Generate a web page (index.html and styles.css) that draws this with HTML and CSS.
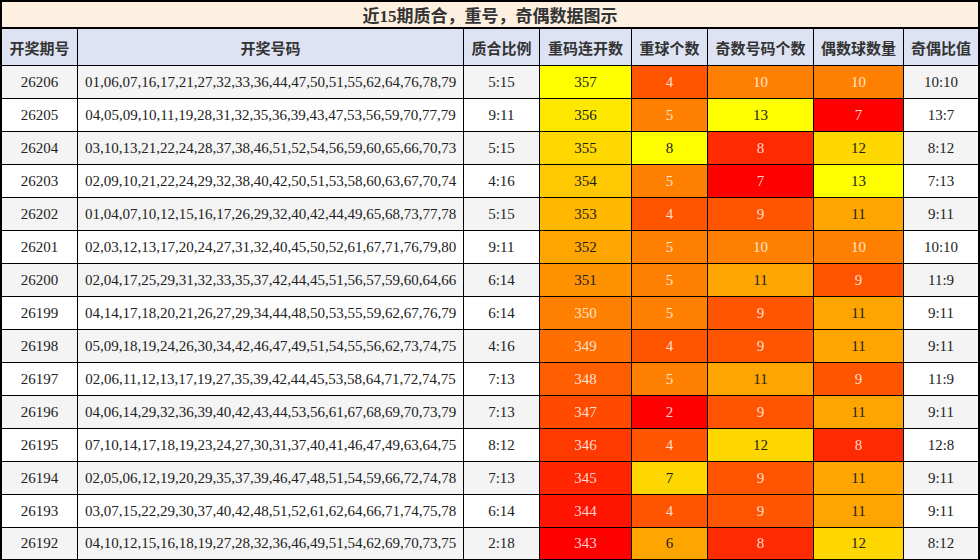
FILE: index.html
```html
<!DOCTYPE html>
<html lang="zh">
<head>
<meta charset="utf-8">
<title>近15期质合，重号，奇偶数据图示</title>
<link rel="stylesheet" href="styles.css">
</head>
<body>
<table class="chart">
  <colgroup>
    <col class="c-issue"><col class="c-nums"><col class="c-ratio"><col class="c-repeat">
    <col class="c-ball"><col class="c-odd"><col class="c-even"><col class="c-oe">
  </colgroup>
  <thead>
    <tr class="title-row"><th colspan="8">近15期质合，重号，奇偶数据图示</th></tr>
    <tr class="head-row">
      <th>开奖期号</th><th>开奖号码</th><th>质合比例</th><th>重码连开数</th>
      <th>重球个数</th><th>奇数号码个数</th><th>偶数球数量</th><th>奇偶比值</th>
    </tr>
  </thead>
  <tbody>
    <tr><td>26206</td><td>01,06,07,16,17,21,27,32,33,36,44,47,50,51,55,62,64,76,78,79</td><td>5:15</td><td class="r357">357</td><td class="h4 lt">4</td><td class="h10 lt">10</td><td class="h10 lt">10</td><td>10:10</td></tr>
    <tr><td>26205</td><td>04,05,09,10,11,19,28,31,32,35,36,39,43,47,53,56,59,70,77,79</td><td>9:11</td><td class="r356">356</td><td class="h5 lt">5</td><td class="h13">13</td><td class="h7 lt">7</td><td>13:7</td></tr>
    <tr><td>26204</td><td>03,10,13,21,22,24,28,37,38,46,51,52,54,56,59,60,65,66,70,73</td><td>5:15</td><td class="r355">355</td><td class="h13">8</td><td class="h8 lt">8</td><td class="h12">12</td><td>8:12</td></tr>
    <tr><td>26203</td><td>02,09,10,21,22,24,29,32,38,40,42,50,51,53,58,60,63,67,70,74</td><td>4:16</td><td class="r354">354</td><td class="h5 lt">5</td><td class="h7 lt">7</td><td class="h13">13</td><td>7:13</td></tr>
    <tr><td>26202</td><td>01,04,07,10,12,15,16,17,26,29,32,40,42,44,49,65,68,73,77,78</td><td>5:15</td><td class="r353">353</td><td class="h4 lt">4</td><td class="h9 lt">9</td><td class="h11">11</td><td>9:11</td></tr>
    <tr><td>26201</td><td>02,03,12,13,17,20,24,27,31,32,40,45,50,52,61,67,71,76,79,80</td><td>9:11</td><td class="r352">352</td><td class="h5 lt">5</td><td class="h10 lt">10</td><td class="h10 lt">10</td><td>10:10</td></tr>
    <tr><td>26200</td><td>02,04,17,25,29,31,32,33,35,37,42,44,45,51,56,57,59,60,64,66</td><td>6:14</td><td class="r351">351</td><td class="h5 lt">5</td><td class="h11">11</td><td class="h9 lt">9</td><td>11:9</td></tr>
    <tr><td>26199</td><td>04,14,17,18,20,21,26,27,29,34,44,48,50,53,55,59,62,67,76,79</td><td>6:14</td><td class="r350 lt">350</td><td class="h5 lt">5</td><td class="h9 lt">9</td><td class="h11">11</td><td>9:11</td></tr>
    <tr><td>26198</td><td>05,09,18,19,24,26,30,34,42,46,47,49,51,54,55,56,62,73,74,75</td><td>4:16</td><td class="r349 lt">349</td><td class="h4 lt">4</td><td class="h9 lt">9</td><td class="h11">11</td><td>9:11</td></tr>
    <tr><td>26197</td><td>02,06,11,12,13,17,19,27,35,39,42,44,45,53,58,64,71,72,74,75</td><td>7:13</td><td class="r348 lt">348</td><td class="h5 lt">5</td><td class="h11">11</td><td class="h9 lt">9</td><td>11:9</td></tr>
    <tr><td>26196</td><td>04,06,14,29,32,36,39,40,42,43,44,53,56,61,67,68,69,70,73,79</td><td>7:13</td><td class="r347 lt">347</td><td class="h7 lt">2</td><td class="h9 lt">9</td><td class="h11">11</td><td>9:11</td></tr>
    <tr><td>26195</td><td>07,10,14,17,18,19,23,24,27,30,31,37,40,41,46,47,49,63,64,75</td><td>8:12</td><td class="r346 lt">346</td><td class="h4 lt">4</td><td class="h12">12</td><td class="h8 lt">8</td><td>12:8</td></tr>
    <tr><td>26194</td><td>02,05,06,12,19,20,29,35,37,39,46,47,48,51,54,59,66,72,74,78</td><td>7:13</td><td class="r345 lt">345</td><td class="h12">7</td><td class="h9 lt">9</td><td class="h11">11</td><td>9:11</td></tr>
    <tr><td>26193</td><td>03,07,15,22,29,30,37,40,42,48,51,52,61,62,64,66,71,74,75,78</td><td>6:14</td><td class="r344 lt">344</td><td class="h4 lt">4</td><td class="h9 lt">9</td><td class="h11">11</td><td>9:11</td></tr>
    <tr><td>26192</td><td>04,10,12,15,16,18,19,27,28,32,36,46,49,51,54,62,69,70,73,75</td><td>2:18</td><td class="r343 lt">343</td><td class="h11">6</td><td class="h8 lt">8</td><td class="h12">12</td><td>8:12</td></tr>
  </tbody>
</table>
</body>
</html>
```

FILE: styles.css
```css
html, body {
  margin: 0;
  padding: 0;
  background: #ffffff;
}

.chart {
  box-sizing: border-box;
  width: 980px;
  table-layout: fixed;
  border-collapse: separate;
  border-spacing: 0;
  border: 2px solid #000;
  font-family: "Liberation Serif", "Noto Sans CJK SC", serif;
  color: #333;
}

.c-issue { width: 76px; }
.c-nums { width: 386px; }
.c-ratio { width: 76px; }
.c-repeat { width: 92px; }
.c-ball { width: 76px; }
.c-odd { width: 106px; }
.c-even { width: 90px; }
.c-oe { width: 74px; }

.chart th,
.chart td {
  box-sizing: border-box;
  border: 0;
  border-right: 1px solid #000;
  border-bottom: 1px solid #000;
  text-align: center;
  padding: 0;
  white-space: nowrap;
  overflow: hidden;
}

.chart th:last-child,
.chart td:last-child {
  border-right: 0;
}

.chart tbody tr:last-child td {
  border-bottom: 0;
}

.title-row th {
  height: 26px;
  background: #fdf0e1;
  font-size: 17px;
  font-weight: bold;
  color: #333;
  border-bottom: 2px solid #000;
}

.head-row th {
  height: 37px;
  background: #dde3f3;
  font-size: 15px;
  font-weight: bold;
  color: #333;
  font-family: "Noto Sans CJK SC", sans-serif;
}

.chart tbody td {
  height: 33px;
  font-size: 15px;
  color: #222;
}

.chart tbody tr:last-child td {
  height: 31px;
}

.chart tbody tr:nth-child(odd) { background: #f4f4f4; }
.chart tbody tr:nth-child(even) { background: #ffffff; }

/* 重码连开数 gradient */
.r357 { background: #ffff00; }
.r356 { background: #ffe800; }
.r355 { background: #ffd800; }
.r354 { background: #ffc800; }
.r353 { background: #ffb700; }
.r352 { background: #ffa500; }
.r351 { background: #ff9200; }
.r350 { background: #ff8000; }
.r349 { background: #ff6e00; }
.r348 { background: #ff5e00; }
.r347 { background: #ff4a00; }
.r346 { background: #ff3a00; }
.r345 { background: #ff2600; }
.r344 { background: #ff1400; }
.r343 { background: #ff0000; }

/* value heat classes */
.h13 { background: #ffff00; }
.h12 { background: #ffd700; }
.h11 { background: #ffa500; }
.h10 { background: #ff8000; }
.h5 { background: #ff8000; }
.h9 { background: #ff5500; }
.h4 { background: #ff5500; }
.h8 { background: #ff2b00; }
.h7 { background: #ff0000; }

.chart tbody td.lt { color: rgba(255, 255, 255, 0.82); }
```
